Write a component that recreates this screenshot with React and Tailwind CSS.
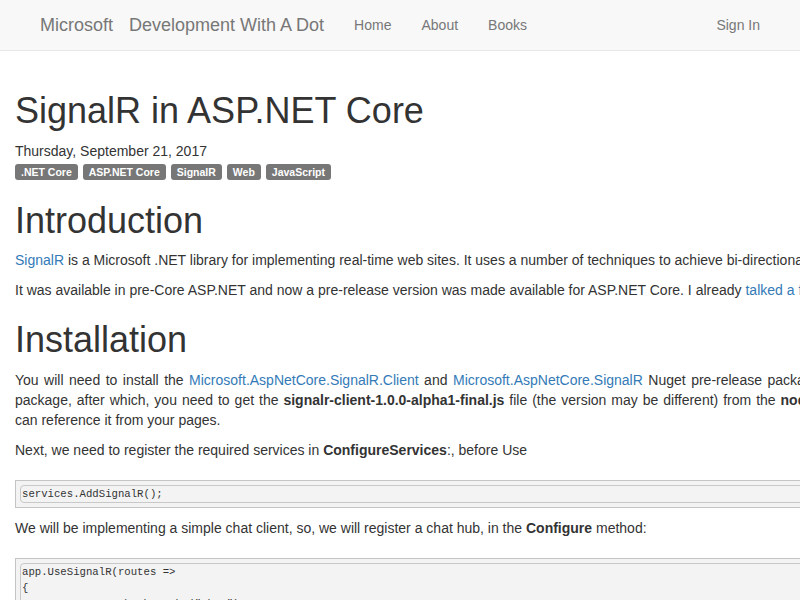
import React from "react";

const font = { fontFamily: '"Liberation Sans", Arial, sans-serif' };

function Tag({ children }) {
  return (
    <span className="inline-block bg-[#777777] text-white font-bold text-[10.5px] leading-none px-[6px] pt-[3px] pb-[3px] rounded-[3px] mr-[5px]">
      {children}
    </span>
  );
}

function Code({ lines }) {
  return (
    <div className="mt-[20px] mb-[10px] border border-[#c4c4c4] bg-[#f3f3f3] p-[4px]">
      <pre
        className="border border-[#c8c8c8] rounded-l-[4px] bg-[#f3f3f3] text-[10.67px] leading-[16px] text-[#333] pl-[1px] m-0"
        style={{ fontFamily: '"Liberation Mono", "Courier New", monospace' }}
      >
        {lines.join("\n")}
      </pre>
    </div>
  );
}

export default function App() {
  return (
    <div className="w-[800px] h-[600px] overflow-hidden bg-white text-[#333333]" style={font}>
      <nav className="h-[51px] bg-[#f8f8f8] border-b border-[#e7e7e7] flex items-center pl-[40px] pr-[40px] text-[#777777]">
        <span className="text-[18px]">Microsoft</span>
        <span className="text-[18px] ml-[16px]">Development With A Dot</span>
        <span className="text-[14px] ml-[30px]">Home</span>
        <span className="text-[14px] ml-[30px]">About</span>
        <span className="text-[14px] ml-[30px]">Books</span>
        <span className="text-[14px] ml-auto">Sign In</span>
      </nav>
      <main className="w-[1170px] px-[15px] text-[14px] leading-[20px]">
        <h1 className="text-[36px] leading-[1.1] mt-[40px] mb-[10px] font-normal">SignalR in ASP.NET Core</h1>
        <div>Thursday, September 21, 2017</div>
        <div className="leading-[20px]">
          <Tag>.NET Core</Tag>
          <Tag>ASP.NET Core</Tag>
          <Tag>SignalR</Tag>
          <Tag>Web</Tag>
          <Tag>JavaScript</Tag>
        </div>
        <h1 className="text-[36px] leading-[1.1] mt-[20px] mb-[10px] font-normal">Introduction</h1>
        <p className="mb-[10px]">
          <span className="text-[#337ab7]">SignalR</span> is a Microsoft .NET library for implementing real-time web sites. It uses a number of techniques to achieve bi-directional communication between server and client.
        </p>
        <p className="mb-[10px]">
          It was available in pre-Core ASP.NET and now a pre-release version was made available for ASP.NET Core. I already <span className="text-[#337ab7]">talked a few times</span> about SignalR.
        </p>
        <h1 className="text-[36px] leading-[1.1] mt-[20px] mb-[10px] font-normal">Installation</h1>
        <div className="mb-[10px] text-justify">
          <div className="[text-align-last:justify]">
            You will need to install the <span className="text-[#337ab7]">Microsoft.AspNetCore.SignalR.Client</span> and <span className="text-[#337ab7]">Microsoft.AspNetCore.SignalR</span> Nuget pre-release packages. You will also need to install the JavaScript client's
          </div>
          <div className="[text-align-last:justify]">
            package, after which, you need to get the <b>signalr-client-1.0.0-alpha1-final.js</b> file (the version may be different) from the <b>node_modules</b> folder and copy it to <b>wwwroot</b>, so that you
          </div>
          <div>can reference it from your pages.</div>
        </div>
        <p className="mb-[10px]">
          Next, we need to register the required services in <b>ConfigureServices</b>:, before Use
        </p>
        <Code lines={["services.AddSignalR();"]} />
        <p className="mb-[10px]">
          We will be implementing a simple chat client, so, we will register a chat hub, in the <b>Configure</b> method:
        </p>
        <Code lines={["app.UseSignalR(routes =>", "{", "    routes.MapHub<ChatHub>(\"chat\");", "});"]} />
      </main>
    </div>
  );
}
